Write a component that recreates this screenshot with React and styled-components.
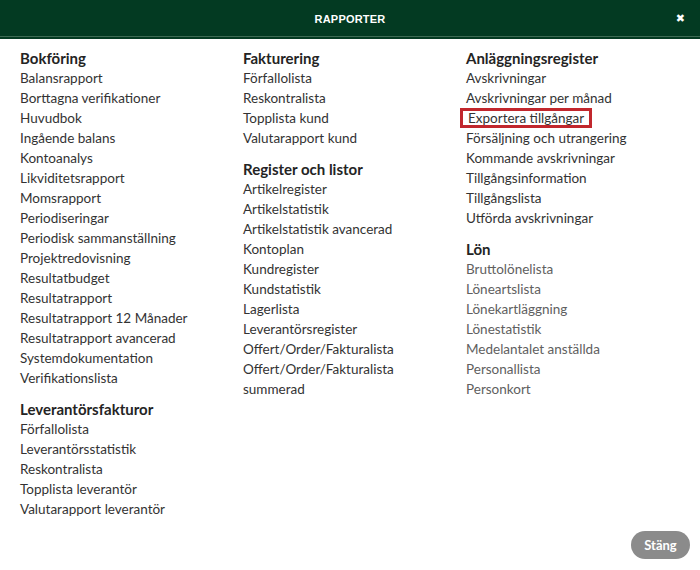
import React from "react";
import styled, { createGlobalStyle } from "styled-components";

const GlobalStyle = createGlobalStyle`
  html, body {
    margin: 0;
    padding: 0;
    background: #fff;
  }
  body {
    font-family: "Lato", "Open Sans", sans-serif;
  }
`;

const columns = [
  [
    {
      title: "Bokföring",
      items: [
        "Balansrapport",
        "Borttagna verifikationer",
        "Huvudbok",
        "Ingående balans",
        "Kontoanalys",
        "Likviditetsrapport",
        "Momsrapport",
        "Periodiseringar",
        "Periodisk sammanställning",
        "Projektredovisning",
        "Resultatbudget",
        "Resultatrapport",
        "Resultatrapport 12 Månader",
        "Resultatrapport avancerad",
        "Systemdokumentation",
        "Verifikationslista",
      ],
    },
    {
      title: "Leverantörsfakturor",
      items: [
        "Förfallolista",
        "Leverantörsstatistik",
        "Reskontralista",
        "Topplista leverantör",
        "Valutarapport leverantör",
      ],
    },
  ],
  [
    {
      title: "Fakturering",
      items: ["Förfallolista", "Reskontralista", "Topplista kund", "Valutarapport kund"],
    },
    {
      title: "Register och listor",
      items: [
        "Artikelregister",
        "Artikelstatistik",
        "Artikelstatistik avancerad",
        "Kontoplan",
        "Kundregister",
        "Kundstatistik",
        "Lagerlista",
        "Leverantörsregister",
        "Offert/Order/Fakturalista",
        "Offert/Order/Fakturalista summerad",
      ],
    },
  ],
  [
    {
      title: "Anläggningsregister",
      items: [
        "Avskrivningar",
        "Avskrivningar per månad",
        "Exportera tillgångar",
        "Försäljning och utrangering",
        "Kommande avskrivningar",
        "Tillgångsinformation",
        "Tillgångslista",
        "Utförda avskrivningar",
      ],
      marked: "Exportera tillgångar",
    },
    {
      title: "Lön",
      muted: true,
      items: [
        "Bruttolönelista",
        "Löneartslista",
        "Lönekartläggning",
        "Lönestatistik",
        "Medelantalet anställda",
        "Personallista",
        "Personkort",
      ],
    },
  ],
];

export default function App() {
  return (
    <>
      <GlobalStyle />
      <Modal>
        <Header>
          <Title>RAPPORTER</Title>
          <Close aria-label="Stäng">✖</Close>
        </Header>
        <Body>
          {columns.map((col, i) => (
            <Column key={i}>
              {col.map((section) => (
                <Section key={section.title}>
                  <Heading>{section.title}</Heading>
                  {section.items.map((item) => (
                    <Item
                      key={item}
                      $muted={section.muted}
                      $marked={section.marked === item}
                    >
                      {item}
                    </Item>
                  ))}
                </Section>
              ))}
            </Column>
          ))}
        </Body>
        <Footer>
          <Button>Stäng</Button>
        </Footer>
      </Modal>
    </>
  );
}

const Modal = styled.div`
  width: 700px;
  height: 570px;
  display: flex;
  flex-direction: column;
  background: #fff;
`;

const Header = styled.div`
  position: relative;
  height: 36px;
  display: flex;
  align-items: center;
  justify-content: center;
  background: #033a22;
  border-bottom: 1px solid #3d6a53;
  box-shadow: 0 2px 0 #043a22;
  margin-bottom: 2px;
`;

const Title = styled.div`
  color: #fff;
  font-family: "Liberation Sans", sans-serif;
  font-weight: 700;
  font-size: 11px;
  letter-spacing: 0.2px;
  padding-top: 2px;
`;

const Close = styled.span`
  position: absolute;
  right: 15px;
  top: 12px;
  color: #fff;
  font-family: "DejaVu Sans", sans-serif;
  font-size: 11px;
  font-weight: 700;
  line-height: 14px;
`;

const Body = styled.div`
  display: grid;
  grid-template-columns: repeat(3, 223px);
  padding: 9px 0 0 20px;
`;

const Column = styled.div`
  display: flex;
  flex-direction: column;
  gap: 11px;
  padding-right: 20px;
`;

const Section = styled.div`
  display: flex;
  flex-direction: column;
  align-items: flex-start;
`;

const Heading = styled.div`
  font-size: 15px;
  font-weight: 700;
  line-height: 20px;
  color: #242424;
`;

const Item = styled.div`
  font-size: 13.5px;
  line-height: 20px;
  color: ${(p) => (p.$muted ? "#606060" : "#333")};
  ${(p) =>
    p.$marked &&
    `
    margin: 0 -6px;
    padding: 0 5px;
    border: 3px solid #c1272d;
    line-height: 14px;
  `}
`;

const Footer = styled.div`
  margin-top: auto;
  display: flex;
  justify-content: flex-end;
  padding: 0 10px 11px;
`;

const Button = styled.button`
  width: 59px;
  height: 28px;
  border: none;
  border-radius: 14px;
  background: #8b8b8b;
  color: #fff;
  font-family: "Lato", sans-serif;
  font-weight: 700;
  font-size: 13px;
  padding: 0;
`;
